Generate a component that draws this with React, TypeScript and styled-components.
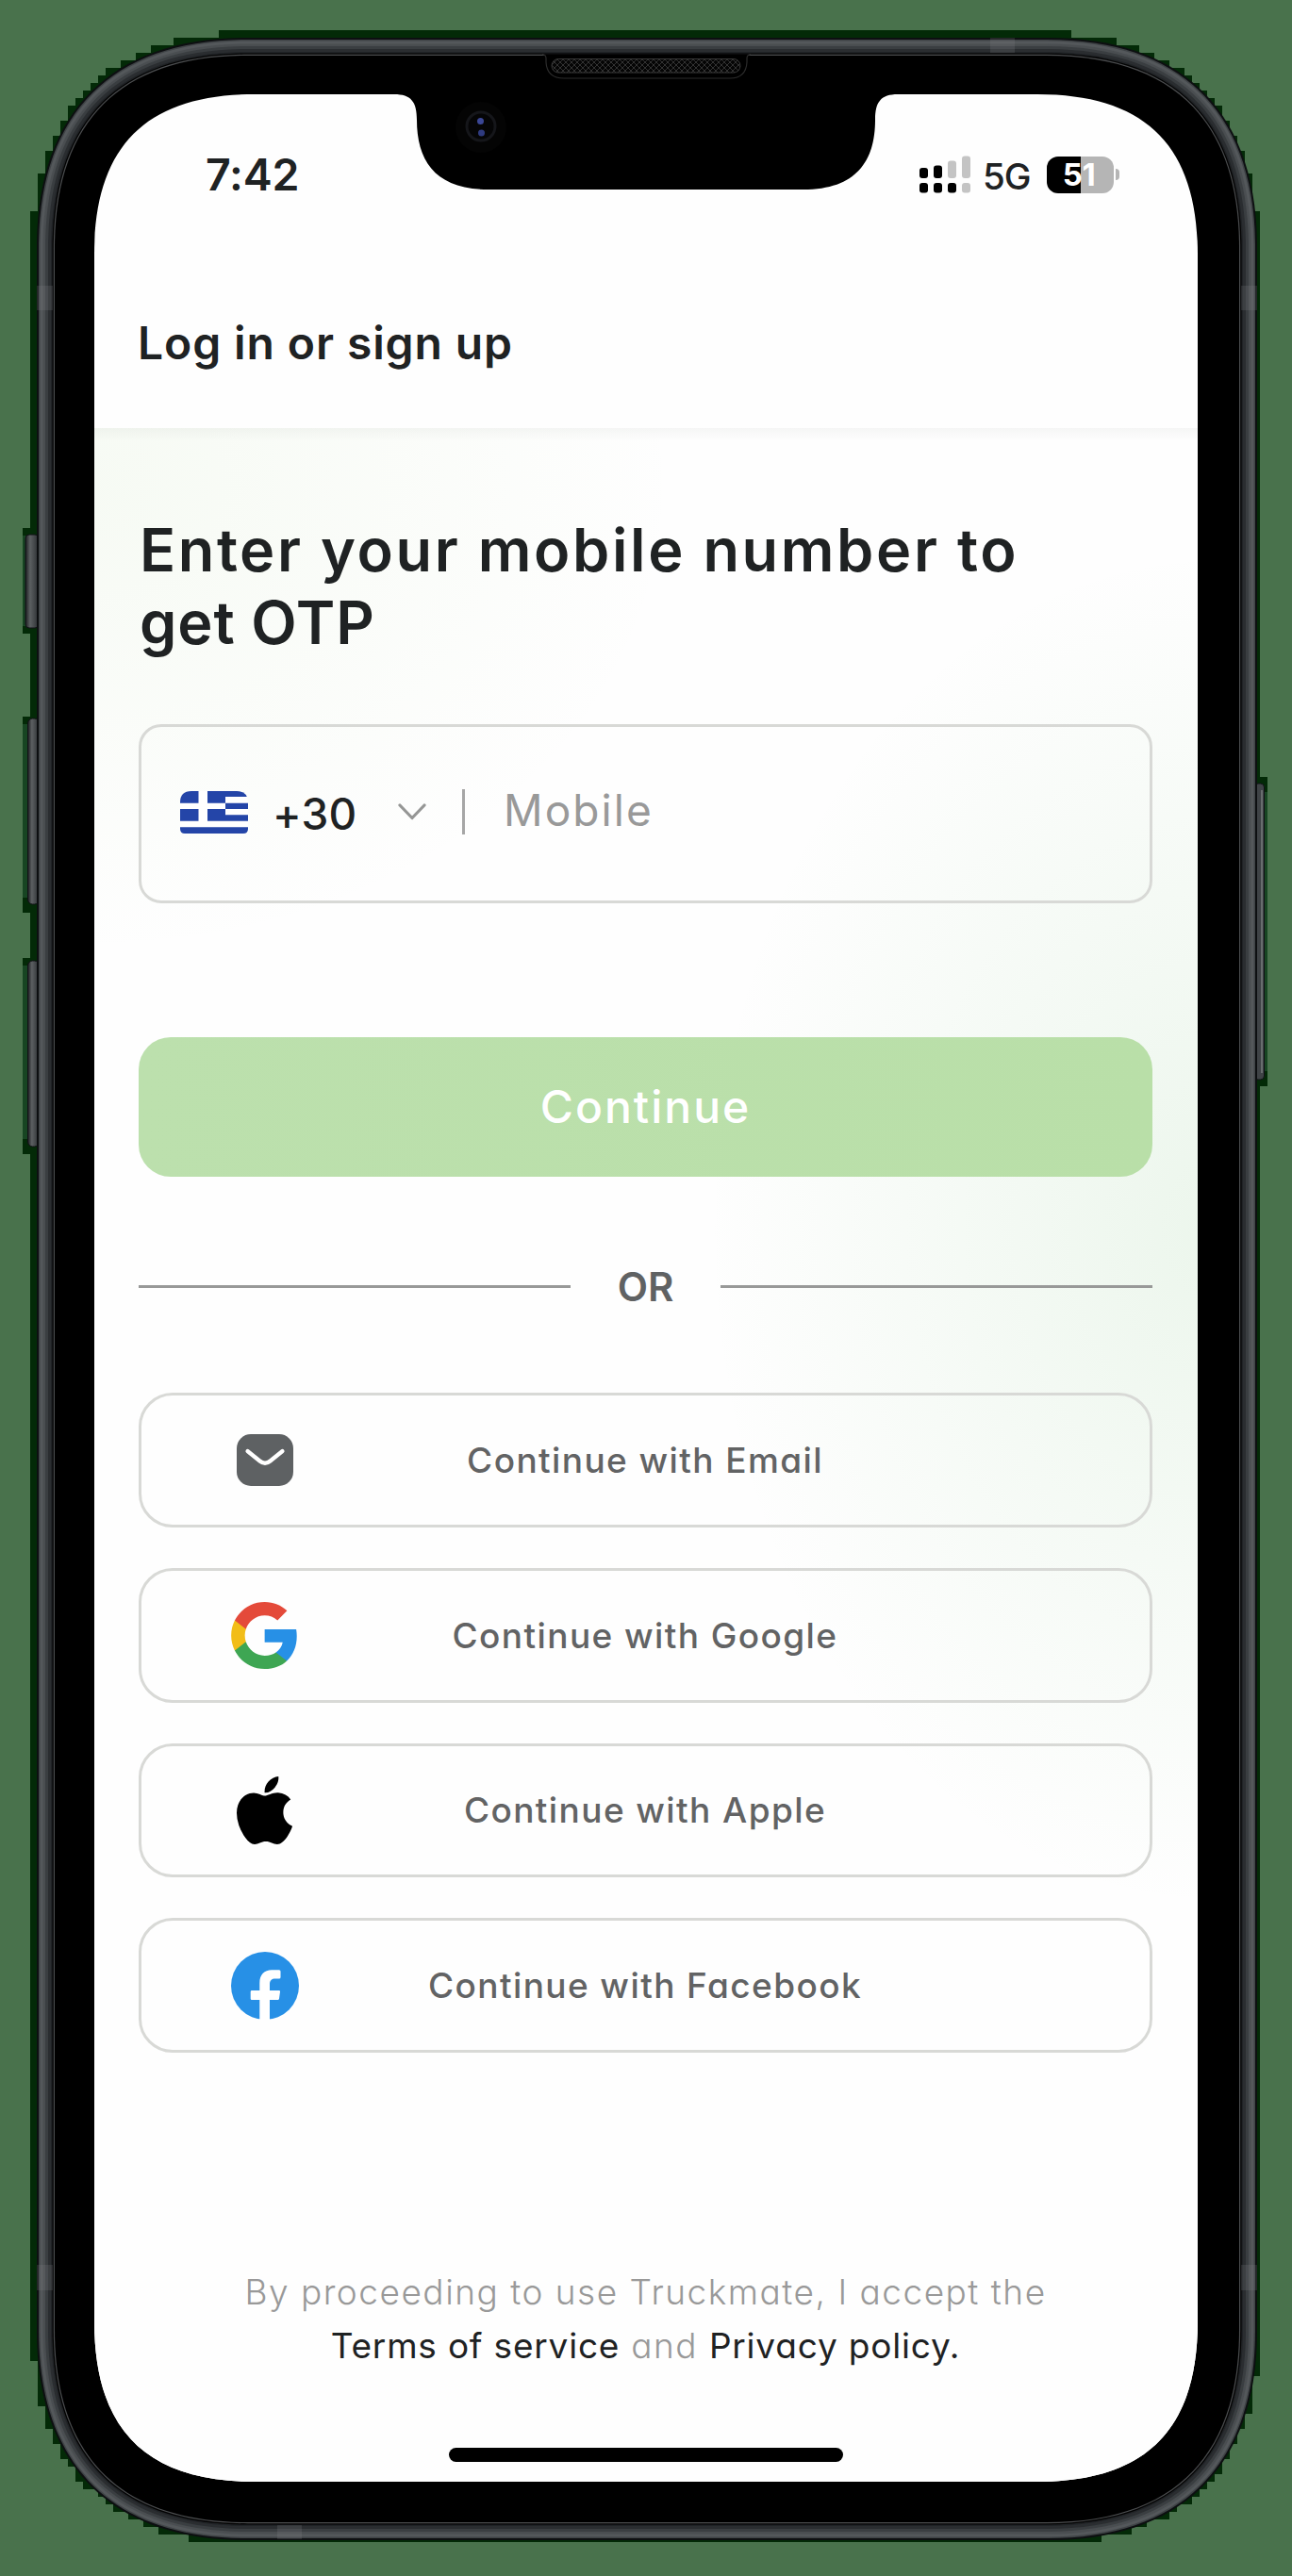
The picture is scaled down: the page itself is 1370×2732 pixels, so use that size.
import React from "react";
import styled, { createGlobalStyle } from "styled-components";

const GlobalStyle = createGlobalStyle`
  * { box-sizing: border-box; }
  body { margin: 0; background: #49724c; }
`;

const ink = "#1f2223";
const muted = "#999999";
const outline = "#d8d9d6";

const Page = styled.main`
  position: relative;
  width: 1370px;
  height: 2732px;
  padding: 100px;
  overflow: hidden;
  background: #49724c;
  font-family: Inter, "Open Sans", sans-serif;
  font-feature-settings: "cv11";
  color: ${ink};
`;

const DeviceArt = styled.svg`
  position: absolute;
  inset: 0;
`;

const Screen = styled.div`
  position: relative;
  display: flex;
  flex-direction: column;
  width: 1170px;
  height: 2532px;
  background: #fefefe;
  clip-path: path("M0 170 C0 55 55 0 170 0 H318 C336 0 342 8 342 27 C342 71 362 101 418 101 H752 C808 101 828 71 828 27 C828 8 834 0 852 0 H1000 C1115 0 1170 55 1170 170 V2362 C1170 2477 1115 2532 1000 2532 H170 C55 2532 0 2477 0 2362 Z");
`;

const StatusBar = styled.div`
  display: flex;
  align-items: center;
  justify-content: space-between;
  height: 170px;
  padding: 0 83px 0 118px;
`;

const Clock = styled.span`
  font-size: 46.5px;
  font-weight: 600;
  letter-spacing: -0.2px;
`;

const StatusIcons = styled.div`
  display: flex;
  align-items: center;
`;

const Network = styled.span`
  margin: 3px 0 0 13px;
  width: 57px;
  font-size: 38.5px;
  font-weight: 500;
  letter-spacing: -1px;
`;

const Battery = styled.div`
  display: flex;
  align-items: center;
  justify-content: center;
  width: 71px;
  height: 39px;
  margin-left: 11px;
  padding-right: 3px;
  border-radius: 12px;
  background: linear-gradient(90deg, #000 36px, #b5b5b5 36px);
  color: #fff;
  font-size: 33px;
  font-weight: 700;
  letter-spacing: -0.5px;
`;

const BatteryTip = styled.div`
  width: 4px;
  height: 12px;
  margin-left: 2px;
  border-radius: 0 4px 4px 0;
  background: #b5b5b5;
`;

const Header = styled.header`
  display: flex;
  align-items: center;
  height: 184px;
  padding: 2px 46px 0;
  font-size: 48px;
  font-weight: 600;
  letter-spacing: 0.9px;
`;

const Body = styled.section`
  display: flex;
  flex-direction: column;
  flex: 1;
  padding: 91px 48px 0 47px;
  background:
    linear-gradient(180deg, rgba(80, 90, 80, 0.05), rgba(80, 90, 80, 0) 14px),
    radial-gradient(ellipse 620px 500px at 0 60px, rgba(140, 200, 100, 0.065), rgba(140, 200, 100, 0)),
    radial-gradient(ellipse 540px 720px at 1190px 850px, rgba(110, 190, 110, 0.125), rgba(110, 190, 110, 0)),
    #fefefe;
`;

const Title = styled.h1`
  display: flex;
  flex-direction: column;
  margin: 0;
  padding-left: 1px;
  font-size: 63px;
  line-height: 77px;
  font-weight: 600;
`;

const TitleLine = styled.span<{ $tracking: number }>`
  letter-spacing: ${({ $tracking }) => $tracking}px;
  white-space: nowrap;
`;

const PhoneField = styled.div`
  display: flex;
  align-items: center;
  height: 190px;
  margin-top: 69px;
  padding: 0 0 4px 41px;
  border: 3px solid ${outline};
  border-radius: 24px;
`;

const DialCode = styled.span`
  margin: 4px 0 0 26px;
  width: 133px;
  font-size: 46px;
  font-weight: 500;
  letter-spacing: 0.2px;
`;

const FieldDivider = styled.div`
  width: 3px;
  height: 48px;
  margin: 0 41px 0 38px;
  background: #a6a6a6;
`;

const Placeholder = styled.span`
  margin-top: -4px;
  font-size: 46px;
  letter-spacing: 2.1px;
  color: ${muted};
`;

const PrimaryButton = styled.button`
  height: 148px;
  margin-top: 142px;
  padding: 0 0 1px;
  border: 0;
  border-radius: 34px;
  background: linear-gradient(90deg, #bce0ad, #b9dfa8);
  color: #fff;
  font: inherit;
  font-size: 48px;
  font-weight: 500;
  letter-spacing: 2px;
`;

const OrRow = styled.div`
  display: flex;
  align-items: center;
  justify-content: space-between;
  height: 60px;
  margin-top: 86px;
  font-size: 42px;
  font-weight: 600;
  color: #606263;
`;

const Rule = styled.div`
  width: 458px;
  height: 3px;
  background: #989998;
`;

const Providers = styled.div`
  display: flex;
  flex-direction: column;
  gap: 43px;
  margin-top: 83px;
`;

const ProviderButton = styled.button`
  display: grid;
  grid-template-columns: 72px 1fr 72px;
  align-items: center;
  height: 142.8px;
  padding: 0 96px 0 95px;
  border: 3px solid ${outline};
  border-radius: 36px;
  background: transparent;
  color: #626364;
  font: inherit;
  font-size: 37px;
  font-weight: 500;
  letter-spacing: 1.4px;
`;

const IconSlot = styled.span<{ $indent: number }>`
  display: flex;
  padding-left: ${({ $indent }) => $indent}px;
`;

const Legal = styled.p`
  margin: 225px 0 0;
  font-size: 37px;
  line-height: 57px;
  font-weight: 300;
  letter-spacing: 1.5px;
  text-align: center;
  white-space: nowrap;
  color: ${muted};
`;

const LegalLink = styled.a`
  color: ${ink};
  font-weight: 400;
  letter-spacing: 0.8px;
`;

const HomeIndicator = styled.div`
  align-self: center;
  width: 418px;
  height: 15px;
  margin-top: 80px;
  border-radius: 8px;
  background: #000;
`;

const framePath = (inset: number) => {
  const l = 39 + inset, r = 1333 - inset, t = 40 + inset, b = 2694 - inset;
  const e = 222 - inset * 0.9;
  const k = 79 - inset * 0.5;
  return `M${l} ${t + e} C${l} ${t + k} ${l + k} ${t} ${l + e} ${t} H${r - e} C${r - k} ${t} ${r} ${t + k} ${r} ${t + e} V${b - e} C${r} ${b - k} ${r - k} ${b} ${r - e} ${b} H${l + e} C${l + k} ${b} ${l} ${b - k} ${l} ${b - e} Z`;
};

const rim: [number, string][] = [
  [0, "#0d0f11"], [2, "#3f4346"], [3.5, "#54585b"], [6.5, "#4a4e51"], [9, "#3a3e41"],
  [12, "#2a2d30"], [15, "#202326"], [16.5, "#030303"], [17.8, "#4b4d4f"], [19, "#000"],
];

// The stepped shadow sits on an 8px grid; rows run from the left edge inwards.
const topSteps: [number, number][] = [
  [32, 224], [40, 184], [48, 160], [56, 144], [64, 128], [72, 112], [80, 104], [88, 96],
  [96, 88], [104, 80], [112, 72], [128, 64], [144, 56], [160, 48], [184, 40], [232, 32],
];
const leftSide = topSteps.map(([x, y], i) => `${i ? `H${x} ` : `M${x} `}${i ? `V${y}` : y}`).join(" ");
const rightSide = [...topSteps].reverse().map(([x, y]) => `V${y} H${1368 - x}`).join(" ").replace(/^V32 /, "");
const bottomRight: [number, number][] = [
  [1328, 2520], [1320, 2560], [1312, 2576], [1304, 2592], [1296, 2608], [1288, 2624], [1280, 2632], [1272, 2640],
  [1264, 2648], [1248, 2656], [1240, 2664], [1216, 2672], [1200, 2680], [1168, 2688],
];
const bottomLeft: [number, number][] = [
  [200, 2688], [168, 2680], [152, 2672], [136, 2664], [120, 2656], [112, 2648], [104, 2640], [88, 2632],
  [80, 2616], [72, 2608], [64, 2592], [56, 2576], [48, 2552], [40, 2504],
];
const haloPath = `${leftSide} ${rightSide} V224 ${bottomRight.map(([x, y]) => `V${y} H${x}`).join(" ")} V2696 ${bottomLeft
  .map(([x, y]) => `H${x} V${y}`)
  .join(" ")} H32 Z`;

function Device() {
  return (
    <DeviceArt width="1370" height="2732" viewBox="0 0 1370 2732">
      <defs>
        <linearGradient id="key" x1="0" x2="1" y1="0" y2="0">
          <stop offset="0" stopColor="#1c1c20" />
          <stop offset="0.35" stopColor="#5c6062" />
          <stop offset="1" stopColor="#2b2e31" />
        </linearGradient>
        <pattern id="mesh" width="6" height="6" patternUnits="userSpaceOnUse">
          <rect width="6" height="6" fill="#050505" />
          <path d="M0 0 L6 6 M6 0 L0 6" stroke="#323232" strokeWidth="1" />
        </pattern>
      </defs>
      <g fill="#032a07" shapeRendering="crispEdges">
        <path d={haloPath} />
        <path d="M24 560 H40 V672 H24 Z M24 760 H40 V968 H24 Z M24 1016 H40 V1224 H24 Z M1330 824 H1344 V1152 H1330 Z" />
      </g>
      <g fill="#174522" shapeRendering="crispEdges">
        <path d="M24 568 H28 V664 H24 Z M24 768 H29 V952 H24 Z M24 1024 H29 V1208 H24 Z M1341 840 H1344 V1136 H1341 Z" />
      </g>
      <rect x="27" y="567" width="14" height="99" rx="4" fill="url(#key)" stroke="#111116" />
      <rect x="29.5" y="762" width="12" height="197" rx="5" fill="url(#key)" stroke="#111116" />
      <rect x="29.5" y="1019" width="12" height="197" rx="5" fill="url(#key)" stroke="#111116" />
      <rect x="1330" y="831" width="10.5" height="314" rx="4" fill="#3f4346" stroke="#111116" />
      <path d="M1338 838 V1138" stroke="#777a7d" strokeWidth="1.5" />
      {rim.map(([inset, color]) => (
        <path key={inset} d={framePath(inset)} fill={color} />
      ))}
      <g fill="#85898c" opacity="0.2">
        <rect x="39" y="303" width="17" height="26" />
        <rect x="1316" y="303" width="17" height="26" />
        <rect x="39" y="2402" width="17" height="27" />
        <rect x="1316" y="2402" width="17" height="27" />
        <rect x="1050" y="40" width="26" height="16" />
        <rect x="294" y="2678" width="26" height="15" />
      </g>
      <path d="M575 57.5 Q579 58 579 62 V66 Q580 83 598 83 H774 Q791 83 792 66 V62 Q792 58 796 57.5" fill="#000" stroke="#2c2c2c" strokeWidth="1.2" />
      <rect x="585" y="62.5" width="200" height="14.5" rx="7.2" fill="url(#mesh)" stroke="#3a3a3a" strokeWidth="1" />
      <circle cx="510" cy="135" r="27" fill="#040404" />
      <circle cx="510" cy="134" r="15" fill="#050506" stroke="#15161a" strokeWidth="3" />
      <circle cx="509.5" cy="128.5" r="3.5" fill="#3b4796" />
      <circle cx="510.5" cy="141" r="3.5" fill="#2f3b80" />
    </DeviceArt>
  );
}

function Signal() {
  return (
    <svg width="54" height="40" viewBox="0 0 54 40">
      <g fill="#000">
        <rect x="0" y="13" width="9" height="11" rx="3" />
        <rect x="15" y="10.5" width="9" height="13.5" rx="3" />
        <rect x="0" y="29" width="9" height="10.5" rx="3" />
        <rect x="15" y="29" width="9" height="10.5" rx="3" />
        <rect x="30" y="29" width="9" height="10.5" rx="3" />
      </g>
      <g fill="#c4c4c4">
        <rect x="30" y="5.5" width="9" height="18.5" rx="3" />
        <rect x="45" y="0.5" width="9" height="23.5" rx="3" />
        <rect x="45" y="29" width="9" height="10.5" rx="3" />
      </g>
    </svg>
  );
}

function GreekFlag() {
  return (
    <svg width="72" height="45" viewBox="0 0 72 45">
      <clipPath id="flag"><path d="M0 12 Q0 0 12 0 H60 Q72 0 72 12 V40 Q72 45 67 45 H5 Q0 45 0 40 Z" /></clipPath>
      <g clipPath="url(#flag)">
        <rect width="72" height="45" fill="#fff" />
        <path fill="#2445a8" d="M0 0H19.5V12.7H0Z M29 0H72V6H48V12.7H29Z M48 12.7H72V19H48Z M0 19H19.5V31.7H0Z M29 19H48V25.3H72V31.7H29Z M0 38.3H72V45H0Z" />
      </g>
    </svg>
  );
}

function ChevronDown() {
  return (
    <svg width="30" height="18" viewBox="0 0 30 18" fill="none" stroke="#959695" strokeWidth="3.2" strokeLinecap="round" strokeLinejoin="round">
      <path d="M2 2 L15 15.5 L28 2" />
    </svg>
  );
}

function MailIcon() {
  return (
    <svg width="60" height="55" viewBox="0 0 60 55">
      <rect width="60" height="55" rx="15" fill="#5e6163" />
      <path d="M11.5 18 L24.5 28.5 Q30 33 35.5 28.5 L48.5 18" fill="none" stroke="#fff" strokeWidth="4.2" strokeLinecap="round" />
    </svg>
  );
}

function GoogleIcon() {
  return (
    <svg width="70" height="71" viewBox="1 1 21.6 22">
      <path fill="#2790e6" d="M22.56 12.25c0-.78-.07-1.53-.2-2.25H12v4.26h5.92c-.26 1.37-1.04 2.53-2.21 3.31v2.77h3.57c2.08-1.92 3.28-4.74 3.28-8.09z" />
      <path fill="#3ea653" d="M12 23c2.97 0 5.46-.98 7.28-2.66l-3.57-2.77c-.98.66-2.23 1.06-3.71 1.06-2.86 0-5.29-1.93-6.16-4.53H2.18v2.84C3.99 20.53 7.7 23 12 23z" />
      <path fill="#f2bd18" d="M5.84 14.09c-.22-.66-.35-1.36-.35-2.09s.13-1.43.35-2.09V7.07H2.18C1.43 8.55 1 10.22 1 12s.43 3.45 1.18 4.93l3.66-2.84z" />
      <path fill="#e44a3a" d="M12 5.38c1.62 0 3.06.56 4.21 1.64l3.15-3.15C17.45 2.09 14.97 1 12 1 7.7 1 3.99 3.47 2.18 7.07l3.66 2.84c.87-2.6 3.3-4.53 6.16-4.53z" />
    </svg>
  );
}

function AppleIcon() {
  return (
    <svg width="59" height="72" viewBox="4 32 376 448" preserveAspectRatio="none">
      <path d="M318.700 268.700c-.2-36.700 16.400-64.400 50-84.800-18.800-26.900-47.200-41.700-84.700-44.600-35.500-2.800-74.300 20.700-88.500 20.700-15 0-49.400-19.700-76.400-19.700C63.300 141.200 4 184.800 4 273.500q0 39.300 14.400 81.200c12.800 36.700 59 126.700 107.200 125.200 25.200-.6 43-17.900 75.800-17.900 31.800 0 48.300 17.900 76.400 17.900 48.600-.7 90.400-82.500 102.600-119.300-65.200-30.700-61.700-90-61.700-91.900zm-56.600-164.200c27.300-32.400 24.800-61.900 24-72.500-24.100 1.400-52 16.400-67.900 34.900-17.500 19.800-27.800 44.300-25.600 71.900 26.100 2 49.900-11.400 69.500-34.300z" />
    </svg>
  );
}

function FacebookIcon() {
  return (
    <svg width="72" height="72" viewBox="0 0 72 72">
      <circle cx="36" cy="36" r="36" fill="#2790e6" />
      <path fill="#fff" d="M30.3 73 V51 H22 Q20.7 51 20.7 49.7 V42.3 Q20.7 41 22 41 H30.3 V33 C30.3 24 35.5 19.3 43 19.3 H51 Q52.5 19.3 52.5 20.8 V27 Q52.5 28.5 51 28.5 H47 C43 28.5 41 30.5 41 34 V41 H50.8 Q52.3 41 52 42.4 L51 49.7 Q50.8 51 49.5 51 H41 V73 Z" />
    </svg>
  );
}

const providers = [
  { label: "Continue with Email", icon: <MailIcon />, indent: 6 },
  { label: "Continue with Google", icon: <GoogleIcon />, indent: 0 },
  { label: "Continue with Apple", icon: <AppleIcon />, indent: 6 },
  { label: "Continue with Facebook", icon: <FacebookIcon />, indent: 0 },
];

export default function App() {
  return (
    <Page>
      <GlobalStyle />
      <Device />
      <Screen>
        <StatusBar>
          <Clock>7:42</Clock>
          <StatusIcons>
            <Signal />
            <Network>5G</Network>
            <Battery>51</Battery>
            <BatteryTip />
          </StatusIcons>
        </StatusBar>
        <Header>Log in or sign up</Header>
        <Body>
          <Title>
            <TitleLine $tracking={2.6}>Enter your mobile number to</TitleLine>
            <TitleLine $tracking={0.9}>get OTP</TitleLine>
          </Title>
          <PhoneField>
            <GreekFlag />
            <DialCode>+30</DialCode>
            <ChevronDown />
            <FieldDivider />
            <Placeholder>Mobile</Placeholder>
          </PhoneField>
          <PrimaryButton>Continue</PrimaryButton>
          <OrRow><Rule />OR<Rule /></OrRow>
          <Providers>
            {providers.map(({ label, icon, indent }) => (
              <ProviderButton key={label}>
                <IconSlot $indent={indent}>{icon}</IconSlot>
                <span>{label}</span>
              </ProviderButton>
            ))}
          </Providers>
          <Legal>
            By proceeding to use Truckmate, I accept the<br />
            <LegalLink>Terms of service</LegalLink> and <LegalLink>Privacy policy.</LegalLink>
          </Legal>
          <HomeIndicator />
        </Body>
      </Screen>
    </Page>
  );
}
